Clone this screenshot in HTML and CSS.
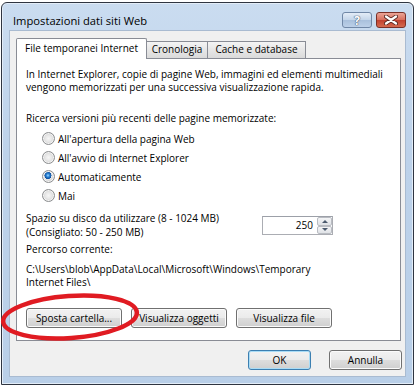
FILE: index.html
```html
<!DOCTYPE html>
<html lang="it">
<head>
    <meta charset="UTF-8">
    <title>Impostazioni dati siti Web</title>
    <link rel="stylesheet" href="styles.css">
</head>
<body>
    <div class="window">
        <div class="titlebar">
            <span class="title">Impostazioni dati siti Web</span>
            <div class="captionButtons">
                <span class="capBtn helpBtn">?</span>
                <span class="capBtn closeBtn">
                    <svg width="14" height="10" viewBox="0 0 14 10">
                        <path d="M2 1.5 L12 8.5 M12 1.5 L2 8.5" stroke="#5a2a24" stroke-width="4" stroke-linecap="round"/>
                        <path d="M2 1.5 L12 8.5 M12 1.5 L2 8.5" stroke="#ffffff" stroke-width="2.2" stroke-linecap="round"/>
                    </svg>
                </span>
            </div>
        </div>

        <div class="client">
            <div class="tabs">
                <span class="tab active">File temporanei Internet</span>
                <span class="tab tabHistory">Cronologia</span>
                <span class="tab tabCache">Cache e database</span>
            </div>

            <div class="panel">
                <p class="intro">In Internet Explorer, copie di pagine Web, immagini ed elementi multimediali<br>vengono memorizzati per una successiva visualizzazione rapida.</p>

                <p class="groupLabel">Ricerca versioni più recenti delle pagine memorizzate:</p>
                <ul class="radioList">
                    <li><span class="radio"></span>All'apertura della pagina Web</li>
                    <li><span class="radio"></span>All'avvio di Internet Explorer</li>
                    <li><span class="radio checked"></span>Automaticamente</li>
                    <li><span class="radio"></span>Mai</li>
                </ul>

                <div class="diskRow">
                    <p class="diskLabel">Spazio su disco da utilizzare (8 - 1024 MB)<br>(Consigliato: 50 - 250 MB)</p>
                    <div class="spin">
                        <span class="spinValue">250</span>
                        <span class="spinButtons">
                            <span class="spinUp"></span>
                            <span class="spinDown"></span>
                        </span>
                    </div>
                </div>

                <p class="pathLabel">Percorso corrente:</p>
                <p class="path">C:\Users\blob\AppData\Local\Microsoft\Windows\Temporary<br>Internet Files\</p>

                <div class="panelButtons">
                    <button class="btn">Sposta cartella...</button>
                    <button class="btn">Visualizza oggetti</button>
                    <button class="btn">Visualizza file</button>
                </div>
            </div>

            <div class="dialogButtons">
                <button class="btn okButton">OK</button>
                <button class="btn cancelButton">Annulla</button>
            </div>
        </div>
    </div>

    <!-- red hand-drawn mark around the "Sposta cartella" button -->
    <svg class="annotation" width="418" height="386" viewBox="0 0 418 386">
        <ellipse cx="70" cy="317" rx="67" ry="21" fill="none" stroke="#e01b22" stroke-width="4.5" transform="rotate(-4 70 317)"/>
    </svg>
</body>
</html>
```

FILE: styles.css
```css
/* styles.css */
body {
    margin: 0;
    width: 418px;
    height: 386px;
    overflow: hidden;
    background-color: #ffffff;
    font-family: 'Open Sans', 'Noto Sans', sans-serif;
    font-size: 10px;
    color: #000;
    position: relative;
}

p {
    margin: 0;
}

.window {
    box-sizing: border-box;
    width: 413px;
    height: 383px;
    margin: 2px 0 0 1px;
    border: 1px solid #2f3541;
    border-radius: 6px 6px 0 0;
    background: linear-gradient(#cadcf0, #bdd2ea 40%, #b9cfe8);
    box-shadow: inset 0 0 0 1px #e3edf8;
    padding: 0 7px 6px 7px;
}

.titlebar {
    height: 27px;
    display: flex;
    justify-content: space-between;
}

.title {
    font-size: 11.2px;
    line-height: 14px;
    padding: 11px 0 0 4px;
}

.captionButtons {
    display: flex;
    gap: 4px;
    padding-top: 9px;
}

.capBtn {
    box-sizing: border-box;
    height: 16px;
    border-radius: 3px;
    display: flex;
    align-items: center;
    justify-content: center;
}

.helpBtn {
    width: 30px;
    border: 1px solid #7087a6;
    background: linear-gradient(#e3ecf7, #c5d6ea 48%, #a9c0dc 52%, #bcd0e8);
    color: #fff;
    font-weight: bold;
    font-size: 12px;
    text-shadow: 0 0 1px #4d5f78, 0 0 1px #4d5f78, 0 0 1px #4d5f78;
}

.closeBtn {
    width: 30px;
    border: 1px solid #7a3028;
    background: linear-gradient(#eba597, #d8705f 48%, #c2412f 52%, #d46a4f);
}

.client {
    box-sizing: border-box;
    height: 347px;
    background-color: #f0f0f0;
    border: 1px solid #a9bbd1;
    padding: 7px 0 0 6px;
}

.tabs {
    display: flex;
    align-items: flex-end;
    height: 20px;
}

.tab {
    box-sizing: border-box;
    height: 17px;
    border: 1px solid #898c95;
    border-bottom: none;
    background: linear-gradient(#f4f4f4, #e6e6e6 50%, #dadada);
    line-height: 15px;
    text-align: center;
    margin-left: -1px;
}

.tab.active {
    width: 131px;
    height: 21px;
    margin-left: 0;
    margin-bottom: -1px;
    background: #fff;
    border-radius: 2px 2px 0 0;
    position: relative;
    z-index: 1;
    line-height: 18px;
}

.tabHistory {
    width: 62px;
}

.tabCache {
    width: 99px;
}

.panel {
    box-sizing: border-box;
    width: 385px;
    height: 283px;
    background-color: #fff;
    border: 1px solid #898c95;
    padding: 9px 0 0 9px;
}

.intro {
    line-height: 13px;
}

.groupLabel {
    margin-top: 18px;
    line-height: 13px;
}

.radioList {
    list-style: none;
    margin: 4px 0 0 0;
    padding: 0 0 0 16px;
}

.radioList li {
    height: 19px;
    display: flex;
    align-items: center;
}

.radio {
    box-sizing: border-box;
    width: 13px;
    height: 13px;
    margin-right: 3px;
    border: 1px solid #8b8d8f;
    border-radius: 50%;
    background: radial-gradient(circle, #f6f6f6 0, #e8e8e8 3px, #d3d3d3 5.5px);
    box-shadow: inset 0 0 0 1px #f4f4f4;
}

.radio.checked {
    background: radial-gradient(circle at 45% 40%, #a6dcff 0, #2d86d8 1.6px, #0e4d9b 3.4px, #e9e9e9 3.7px, #d3d3d3 5.5px);
}

.diskRow {
    display: flex;
    align-items: flex-start;
    margin-top: 6px;
}

.diskLabel {
    width: 236px;
    line-height: 14px;
}

.spin {
    box-sizing: border-box;
    width: 71px;
    height: 19px;
    margin-top: 5px;
    border: 1px solid #abadb3;
    border-top-color: #9ca0a8;
    background: #fff;
    display: flex;
}

.spinValue {
    flex: 1;
    text-align: right;
    padding-right: 4px;
    line-height: 17px;
}

.spinButtons {
    width: 15px;
    display: flex;
    flex-direction: column;
}

.spinUp, .spinDown {
    flex: 1;
    border: 1px solid #b9bcc2;
    border-radius: 2px;
    background: linear-gradient(#f4f5f7, #dfe2e6);
    display: flex;
    align-items: center;
    justify-content: center;
}

.spinUp::after {
    content: "";
    border-left: 3px solid transparent;
    border-right: 3px solid transparent;
    border-bottom: 3px solid #4b5a6e;
}

.spinDown::after {
    content: "";
    border-left: 3px solid transparent;
    border-right: 3px solid transparent;
    border-top: 3px solid #4b5a6e;
}

.pathLabel {
    margin-top: 4px;
    line-height: 13px;
}

.path {
    margin-top: 7px;
    line-height: 13px;
}

.panelButtons {
    display: flex;
    gap: 9px;
    margin-top: 19px;
}

.btn {
    box-sizing: border-box;
    width: 96px;
    height: 20px;
    padding: 0;
    font: inherit;
    color: #000;
    border: 1px solid #707070;
    border-radius: 3px;
    background: linear-gradient(#f2f2f2, #ebebeb 48%, #dddddd 52%, #cfcfcf);
    box-shadow: inset 0 0 0 1px #fbfbfb;
}

.dialogButtons {
    display: flex;
    justify-content: flex-end;
    gap: 18px;
    margin-top: 9px;
    padding-right: 3px;
}

.okButton {
    width: 63px;
    border-color: #3c7fb1;
    box-shadow: inset 0 0 0 1px #a9dcf6;
}

.cancelButton {
    width: 73px;
}

.annotation {
    position: absolute;
    left: 0;
    top: 0;
    pointer-events: none;
}
```
